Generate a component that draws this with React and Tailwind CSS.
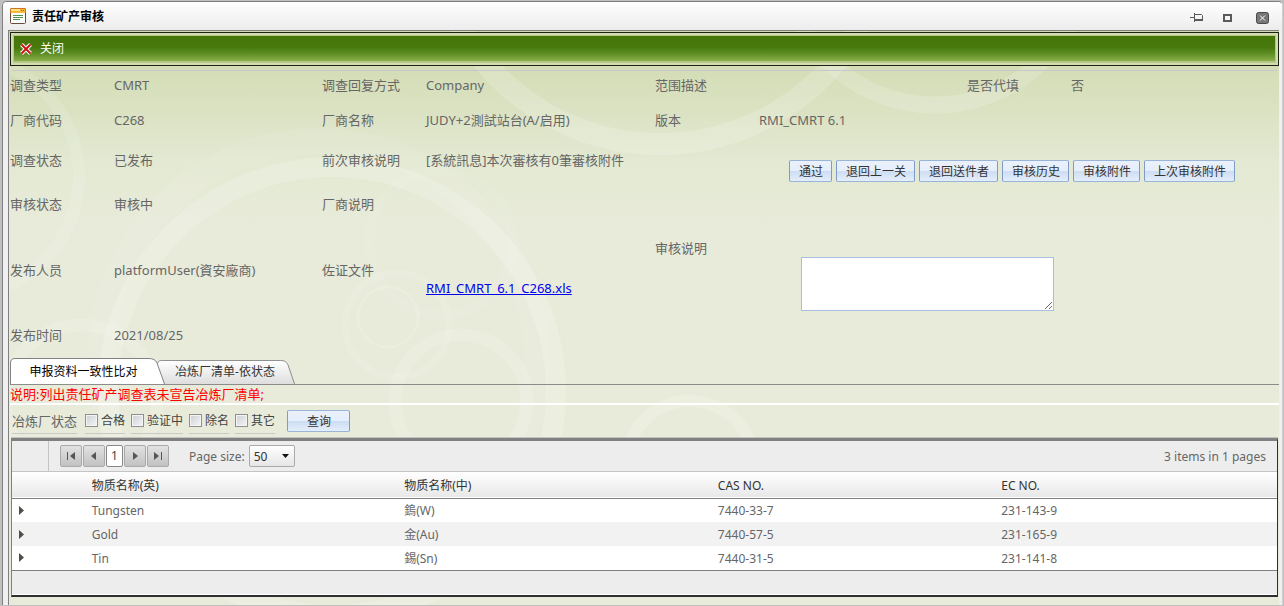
import React, { useState } from "react";

const tabs = ["申报资料一致性比对", "冶炼厂清单-依状态"];
const actions = ["通过", "退回上一关", "退回送件者", "审核历史", "审核附件", "上次审核附件"];
const statuses = ["合格", "验证中", "除名", "其它"];

const materials = [
  { en: "Tungsten", zh: "鎢(W)", cas: "7440-33-7", ec: "231-143-9" },
  { en: "Gold", zh: "金(Au)", cas: "7440-57-5", ec: "231-165-9" },
  { en: "Tin", zh: "錫(Sn)", cas: "7440-31-5", ec: "231-141-8" },
];

function Swirls() {
  return (
    <svg
      className="absolute left-0 top-0 h-full w-full"
      viewBox="0 0 1270 574"
      preserveAspectRatio="xMinYMin slice"
      fill="none"
      stroke="#fff"
      aria-hidden="true"
    >
      <circle cx="323" cy="360" r="224" strokeWidth="20" opacity="0.18" />
      <circle cx="310" cy="328" r="218" strokeWidth="26" opacity="0.08" />
      <circle cx="432" cy="212" r="72" strokeWidth="10" opacity="0.07" />
      <circle cx="379" cy="286" r="30" strokeWidth="3" opacity="0.13" />
      <circle cx="388" cy="294" r="52" strokeWidth="7" opacity="0.1" />
      <circle cx="452" cy="370" r="66" strokeWidth="13" opacity="0.13" />
      <circle cx="681" cy="434" r="64" strokeWidth="12" opacity="0.18" />
      <circle cx="72" cy="370" r="76" strokeWidth="13" opacity="0.15" />
      <circle cx="-50" cy="145" r="120" strokeWidth="12" opacity="0.12" />
      <circle cx="651" cy="-116" r="229" strokeWidth="22" opacity="0.18" />
      <circle cx="926" cy="-78" r="152" strokeWidth="17" opacity="0.16" />
    </svg>
  );
}

function Field({ label, value }) {
  return (
    <>
      <dt className="flex items-center">{label}</dt>
      <dd className="flex items-center whitespace-nowrap">{value}</dd>
    </>
  );
}

function BlueButton({ children, className = "" }) {
  return (
    <button
      type="button"
      className={`h-[22px] whitespace-nowrap rounded-[2px] border border-[#9ab4d8] border-r-[#7f9cc8] border-l-[#7f9cc8] bg-[linear-gradient(#eaf1fc_0%,#e6eefb_48%,#cdddf3_52%,#e4eefb_100%)] pl-[9px] pr-2 pt-px text-xs leading-5 text-[#333] ${className}`}
    >
      {children}
    </button>
  );
}

function PagerButton({ label, path }) {
  return (
    <button
      type="button"
      aria-label={label}
      className="flex h-[22px] w-[22px] items-center justify-center rounded-[2px] border border-[#aaa] bg-gradient-to-b from-[#e2e2e2] to-[#c2c2c2]"
    >
      <svg width="10" height="10" viewBox="0 0 10 10" fill="#555">
        <path d={path} />
      </svg>
    </button>
  );
}

function Tab({ label, active, onClick }) {
  return (
    <button
      type="button"
      role="tab"
      aria-selected={active}
      onClick={onClick}
      className={
        active
          ? "relative z-10 h-[26px] w-[155px] pr-2 pt-px text-xs text-black"
          : "relative -ml-2 h-[24px] w-[138px] pr-[2px] text-xs text-[#333]"
      }
    >
      <svg
        className="absolute inset-0 h-full w-full"
        viewBox="0 0 155 26"
        preserveAspectRatio="none"
        aria-hidden="true"
      >
        <defs>
          <linearGradient id="tabFill" x1="0" y1="0" x2="0" y2="1">
            <stop offset="0" stopColor="#fff" />
            <stop offset="1" stopColor="#dedede" />
          </linearGradient>
        </defs>
        <path
          d="M0.5 26V5Q0.5 0.5 5 0.5H139Q145 0.5 147 5L154.5 26"
          fill={active ? "#fff" : "url(#tabFill)"}
          stroke="#828282"
        />
      </svg>
      <span className="relative">{label}</span>
    </button>
  );
}

function TitleBar() {
  return (
    <header className="flex h-[28px] items-center bg-gradient-to-b from-white to-[#ececec] pl-[7px] pr-[13px]">
      <svg width="16" height="16" viewBox="0 0 16 16" aria-hidden="true">
        <rect x="0.5" y="0.5" width="15" height="15" rx="1" fill="#fff" stroke="#6b4a3b" />
        <path d="M0.5 5V1.5q0-1 1-1h13q1 0 1 1V5" fill="#f6b73c" stroke="#c9761c" />
        <rect x="1" y="1" width="9" height="2" fill="#fde08a" />
        <path d="M11 2h1v1h-1zM13 2h1v1h-1z" fill="#3f8f3c" />
        <path d="M3 7.5h10M3 9.5h10M3 11.5h7" stroke="#4c944a" />
      </svg>
      <h1 className="ml-[6px] pt-px text-xs font-bold text-black">责任矿产审核</h1>
      <div className="ml-auto flex items-center pt-1">
        <button type="button" aria-label="Pin">
          <svg width="14" height="10" viewBox="0 0 14 10" fill="none" stroke="#5a5a5a">
            <path d="M0 4.5h4M4.5 0v9" />
            <path d="M5 1.5h6.5l1 1v5" />
            <path d="M5 7h8" strokeWidth="2" />
          </svg>
        </button>
        <button type="button" aria-label="Maximize" className="ml-[19px]">
          <svg width="9" height="8" viewBox="0 0 9 8" fill="none" stroke="#5a5a5a" strokeWidth="2">
            <rect x="1" y="1" width="7" height="6" />
          </svg>
        </button>
        <button type="button" aria-label="Close window" className="ml-6">
          <svg width="13" height="12" viewBox="0 0 13 12">
            <rect x="0.5" y="0.5" width="12" height="11" rx="2" fill="#777" stroke="#4a4a4a" />
            <path d="M4 3.5l5 5M9 3.5l-5 5" stroke="#fff" />
          </svg>
        </button>
      </div>
    </header>
  );
}

function Toolbar() {
  return (
    <div className="ml-px border border-[#1c2410] bg-[#d3dbb5] p-[2px]">
      <div className="flex h-[28px] items-center border border-b-2 border-[#b3c883] bg-[linear-gradient(#437508_0%,#47790c_45%,#5f8f26_72%,#8cae4c_100%)] pl-[6px] pt-px">
        <button type="button" className="flex items-center gap-2 text-xs text-white">
          <svg width="12" height="12" viewBox="0 0 12 12" fill="none" aria-hidden="true">
            <path d="M1.5 1.5l9 9M10.5 1.5l-9 9" stroke="#fff" strokeWidth="4" />
            <path d="M1.5 1.5l9 9M10.5 1.5l-9 9" stroke="#cc1414" strokeWidth="2" />
          </svg>
          关闭
        </button>
      </div>
    </div>
  );
}

function AuditForm() {
  return (
    <dl className="grid grid-cols-[104fr_208fr_104fr_229fr_104fr_208fr_104fr_208fr] grid-rows-[28px_42px_38px_50px_82px_47px]">
      <Field label="调查类型" value="CMRT" />
      <Field label="调查回复方式" value="Company" />
      <Field label="范围描述" value="" />
      <Field label="是否代填" value="否" />

      <Field label="厂商代码" value="C268" />
      <Field label="厂商名称" value="JUDY+2測試站台(A/启用)" />
      <Field label="版本" value="RMI_CMRT 6.1" />
      <div className="col-span-2" />

      <Field label="调查状态" value="已发布" />
      <Field label="前次审核说明" value="[系統訊息]本次審核有0筆審核附件" />
      <div className="col-span-4 row-span-4 flex items-center">
        <label htmlFor="auditNote" className="w-1/6 pb-1">
          审核说明
        </label>
        <div className="flex-1 self-start pl-[30px] pt-[19px]">
          <div className="flex gap-1">
            {actions.map((action) => (
              <BlueButton key={action}>{action}</BlueButton>
            ))}
          </div>
          <textarea
            id="auditNote"
            className="ml-3 mt-[75px] block h-[54px] w-[253px] border border-[#a5bfdf] bg-white"
          />
        </div>
      </div>

      <Field label="审核状态" value="审核中" />
      <Field label="厂商说明" value="" />

      <Field label="发布人员" value="platformUser(資安廠商)" />
      <Field
        label="佐证文件"
        value={
          <a href="#file" className="mt-9 text-[#0000ee] underline">
            RMI_CMRT_6.1_C268.xls
          </a>
        }
      />

      <Field label="发布时间" value="2021/08/25" />
    </dl>
  );
}

function FilterBar() {
  return (
    <form className="flex h-8 items-center pl-[2px]">
      <span className="mr-2 border-b border-[#c9c9c9] leading-6">冶炼厂状态</span>
      {statuses.map((status) => (
        <label
          key={status}
          className="mr-[6px] flex items-center gap-[3px] border-b border-[#c9c9c9] text-xs leading-6 text-[#444]"
        >
          <input
            type="checkbox"
            className="h-[13px] w-[13px] appearance-none border border-[#8e8f8f] bg-gradient-to-br from-[#cbcfd5] to-[#f6f6f6] shadow-[inset_0_0_0_1px_#f4f4f4]"
          />
          {status}
        </label>
      ))}
      <BlueButton className="ml-[6px] w-[63px]">查询</BlueButton>
    </form>
  );
}

function MaterialGrid() {
  return (
    <div className="ml-[2px] mr-px mt-px border-x border-b-2 border-t-[3px] border-[#808080] border-b-[#2e2e33] border-r-[#2e2e33] bg-[#ededed] shadow-[0_-1px_0_#c4c4c4]">
      <div className="flex h-[31px] items-center border-b border-[#c4c4c4] pr-[11px]">
        <div className="mr-[11px] h-full w-[37px] border-r border-[#c4c4c4]" />
        <div className="flex gap-px">
          <PagerButton label="First page" path="M1 1h1v8H1zM9 1v8L4 5z" />
          <PagerButton label="Previous page" path="M7 1v8L2 5z" />
          <button
            type="button"
            aria-current="page"
            className="h-[22px] w-[17px] rounded-[2px] border border-[#888] bg-white text-xs text-[#444]"
          >
            1
          </button>
          <PagerButton label="Next page" path="M3 1v8l5-4z" />
          <PagerButton label="Last page" path="M1 1v8l5-4zM8 1h1v8H8z" />
        </div>
        <label htmlFor="pageSize" className="ml-5 pt-[2px] text-xs">
          Page size:
        </label>
        <div className="relative ml-1">
          <select
            id="pageSize"
            defaultValue="50"
            className="h-[22px] w-[46px] appearance-none rounded-[2px] border border-[#aaa] bg-gradient-to-b from-white to-[#e6e6e6] pl-1 pt-px text-xs text-[#333]"
          >
            <option>10</option>
            <option>20</option>
            <option>50</option>
          </select>
          <svg
            className="pointer-events-none absolute right-[6px] top-[9px]"
            width="7"
            height="4"
            viewBox="0 0 7 4"
            aria-hidden="true"
          >
            <path d="M0 0h7L3.5 4z" fill="#111" />
          </svg>
        </div>
        <span className="ml-auto pt-[2px] text-xs">3 items in 1 pages</span>
      </div>

      <table className="w-full table-fixed border-collapse text-left text-xs">
        <colgroup>
          <col className="w-[6.3%]" />
          <col className="w-[24.7%]" />
          <col className="w-[24.8%]" />
          <col className="w-[22.4%]" />
          <col />
        </colgroup>
        <thead>
          <tr className="h-[26px] border-b border-[#808080] bg-gradient-to-b from-white to-[#e8e8e8] text-[#333]">
            <th aria-label="Expand" />
            <th className="pt-[2px] font-normal">物质名称(英)</th>
            <th className="pt-[2px] font-normal">物质名称(中)</th>
            <th className="pt-[2px] font-normal">CAS NO.</th>
            <th className="pt-[2px] font-normal">EC NO.</th>
          </tr>
        </thead>
        <tbody className="border-b border-[#808080]">
          {materials.map((item) => (
            <tr key={item.en} className="h-6 odd:bg-white even:bg-[#f2f2f2]">
              <td className="pl-[7px]">
                <button type="button" aria-label={`Expand ${item.en}`} className="block">
                  <svg width="5" height="9" viewBox="0 0 5 9" fill="#4f4f48">
                    <path d="M0 0v9l5-4.5z" />
                  </svg>
                </button>
              </td>
              <td className="pt-[2px]">{item.en}</td>
              <td className="pt-[2px]">{item.zh}</td>
              <td className="pt-[2px]">{item.cas}</td>
              <td className="pt-[2px]">{item.ec}</td>
            </tr>
          ))}
        </tbody>
      </table>
      <div className="h-6 border-b border-white" />
    </div>
  );
}

function App() {
  const [activeTab, setActiveTab] = useState(tabs[0]);

  return (
    <div className="flex min-h-screen flex-col bg-[#c0c0c0] pb-px pl-[2px] pr-px pt-px font-['Noto_Sans','Noto_Sans_CJK_SC',sans-serif] text-[13px] leading-5 text-[#666]">
      <div className="flex flex-1 flex-col overflow-hidden rounded-t-[5px] border-x border-t border-[#808080] border-r-[#d0d0d0] bg-[#efefef]">
        <TitleBar />
        <main className="relative ml-[5px] mr-[3px] flex-1 border-l border-t border-[#808080] bg-[linear-gradient(#d0d9ae_0px,#d6deba_50px,#e3e9d2_130px,#e8ebda_200px)]">
          <Swirls />
          <div className="relative pt-px">
            <Toolbar />
            <div className="ml-[3px] mr-[2px] mt-1 border-b border-[#c8c8cc]" />
            <div className="ml-px">
              <AuditForm />
              <div role="tablist" className="flex items-end border-b border-[#8c8c8c]">
                {tabs.map((tab) => (
                  <Tab
                    key={tab}
                    label={tab}
                    active={tab === activeTab}
                    onClick={() => setActiveTab(tab)}
                  />
                ))}
              </div>
              <p className="border-b-2 border-white leading-[18px] text-[#ff0000]">
                说明:列出责任矿产调查表未宣告冶炼厂清单;
              </p>
              <FilterBar />
            </div>
            <MaterialGrid />
          </div>
        </main>
      </div>
    </div>
  );
}

export default App;
